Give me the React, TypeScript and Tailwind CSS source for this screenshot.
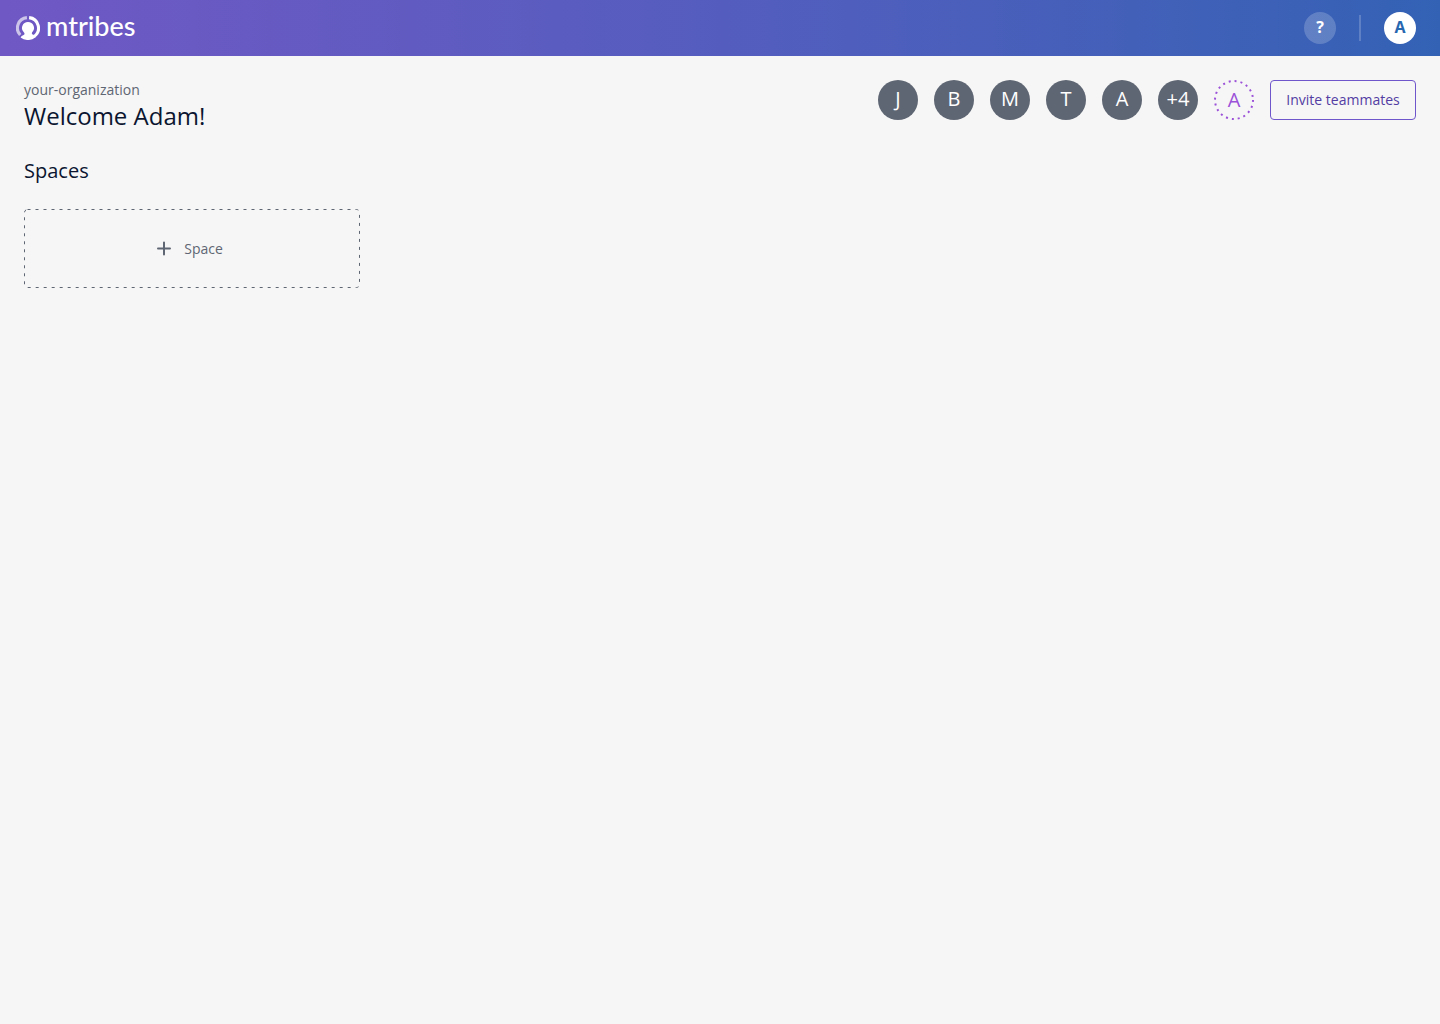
import React from "react";

const teammates = ["J", "B", "M", "T", "A", "+4"];

const Logo: React.FC = () => (
  <a href="#" className="flex items-center gap-[6px] text-white">
    <svg width="24" height="24" viewBox="0 0 24 24" fill="none">
      <path
        d="M4.2 19A10.4 10.4 0 0 1 10.9 1.6"
        stroke="white"
        strokeOpacity="0.65"
        strokeWidth="3.1"
      />
      <path
        d="M13.1 1.6A10.4 10.4 0 0 1 18 20.5"
        stroke="white"
        strokeWidth="3.1"
      />
      <path
        d="M12 6a6 6 0 0 1 4.200 10.300c-.8.9-.2 1.900 1.200 2.400l2.200 2.600A12 12 0 0 1 4.600 21.500c.8-1.400 1.900-1.900 3-2.400 1.200-.6 1.200-1.800.2-2.800A6 6 0 0 1 12 6z"
        fill="white"
      />
    </svg>
    <span className="pb-1 font-['Lato',sans-serif] text-[27px] leading-6 font-medium">
      mtribes
    </span>
  </a>
);

const Header: React.FC = () => (
  <header className="flex h-14 items-center justify-between bg-linear-to-r from-[#7058c4] via-[#545dbe] to-[#3362b5] pr-6 pl-4">
    <Logo />
    <div className="flex items-center gap-6">
      <button className="size-8 rounded-full bg-white/20 pb-[2px] text-base font-bold text-white">
        ?
      </button>
      <div className="-mx-px h-[26px] w-[2px] bg-white/20" />
      <button className="size-8 rounded-full bg-white pb-[2px] text-base font-bold text-[#2767b0]">
        A
      </button>
    </div>
  </header>
);

const App: React.FC = () => {
  return (
    <div className="min-h-screen bg-[#f6f6f6] font-['Open_Sans',sans-serif] text-[#0b1530]">
      <Header />
      <main className="p-6">
        <div className="flex items-start justify-between">
          <div>
            <p className="text-sm text-[#5f6673]">your-organization</p>
            <h1 className="text-2xl">Welcome Adam!</h1>
          </div>
          <div className="flex items-center gap-4">
            {teammates.map((name, i) => (
              <div
                key={i}
                className="flex size-10 items-center justify-center rounded-full bg-[#5f6673] pb-[2px] text-xl text-white"
              >
                {name}
              </div>
            ))}
            <div className="relative flex size-10 items-center justify-center text-xl text-[#9b51d8]">
              <svg className="absolute inset-0" viewBox="0 0 40 40" fill="none">
                <circle
                  cx="20"
                  cy="20"
                  r="19"
                  stroke="currentColor"
                  strokeWidth="2"
                  strokeDasharray="2 3.97"
                />
              </svg>
              A
            </div>
            <button className="h-10 w-[146px] rounded-[4px] border border-[#6f56cb] text-sm text-[#533da3]">
              Invite teammates
            </button>
          </div>
        </div>

        <h2 className="mt-[25px] text-xl">Spaces</h2>
        <button className="relative mt-6 flex h-[79px] w-[336px] items-center justify-center gap-3 pr-[5px] text-sm text-[#5f6673]">
          <svg className="absolute inset-0 size-full" fill="none">
            <rect
              x="0.5"
              y="0.5"
              rx="3"
              className="h-[calc(100%-1px)] w-[calc(100%-1px)]"
              stroke="currentColor"
              strokeDasharray="3 5"
            />
          </svg>
          <svg width="16" height="16" viewBox="0 0 16 16" fill="none">
            <path
              d="M8 1.500v12M2 7.500h12"
              stroke="currentColor"
              strokeWidth="2"
              strokeLinecap="round"
            />
          </svg>
          Space
        </button>
      </main>
    </div>
  );
};

export default App;
